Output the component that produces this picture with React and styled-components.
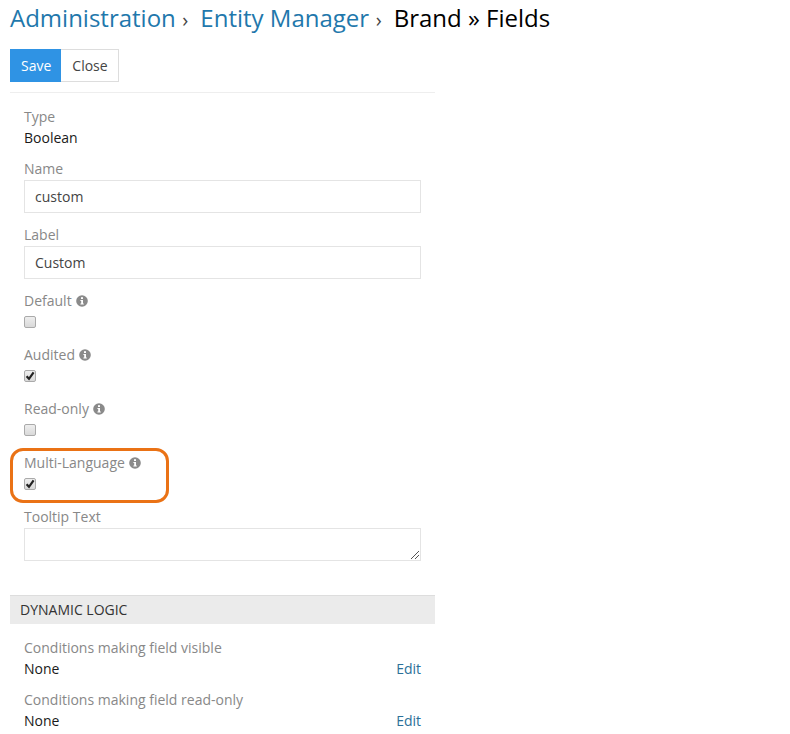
import React from 'react'
import styled, { createGlobalStyle } from 'styled-components'

const GlobalStyle = createGlobalStyle`
  html, body {
    margin: 0;
    background: #fff;
  }
  body {
    font-family: "Open Sans", "Liberation Sans", sans-serif;
    font-size: 14px;
    line-height: 20px;
    color: #333;
  }
`

const Page = styled.div`
  width: 790px;
  height: 734px;
  overflow: hidden;
  box-sizing: border-box;
  padding: 0 0 0 10px;
`
const Title = styled.h3`
  margin: 0;
  height: 49px;
  padding-top: 1px;
  box-sizing: border-box;
  font-size: 24px;
  line-height: 34px;
  font-weight: 400;
  color: #000;
  white-space: nowrap;
`
const Crumb = styled.a`
  color: #1f78ac;
`
const Sep = styled.span`
  margin: 0 12px 0 6.5px;
  font-size: 20px;
  color: #444;
`
const Buttons = styled.div`
  display: flex;
`
const Button = styled.button`
  height: 33px;
  box-sizing: border-box;
  padding: ${p => (p.$primary ? '0 9px 0 10px' : '0 10px 0 11px')};
  font: inherit;
  border: 1px solid ${p => (p.$primary ? '#2f93e4' : '#ddd')};
  border-left-width: ${p => (p.$primary ? 1 : 0)}px;
  background: ${p => (p.$primary ? '#2f93e4' : '#fff')};
  color: ${p => (p.$primary ? '#fff' : '#444')};
`
const Panel = styled.div`
  width: 425px;
  margin-top: 10px;
  border-top: 1px solid #eee;
`
const Body = styled.div`
  padding: 14px 14px 0;
`
const Field = styled.div`
  position: relative;
  margin-bottom: ${p => p.$gap ?? 12}px;
`
const Label = styled.div`
  height: 21px;
  color: #888;
  display: flex;
  align-items: flex-start;
  gap: 4px;
`
const Value = styled.div`
  color: #1a1a1a;
  margin-bottom: -1px;
`
const Input = styled.div`
  height: 33px;
  box-sizing: border-box;
  border: 1px solid #e4e4e4;
  padding: 6px 10px 0;
  color: #444;
`
const TextArea = styled(Input)`
  position: relative;
`
const Resize = styled.svg`
  position: absolute;
  right: 0;
  bottom: 0;
`
const CheckWrap = styled.div`
  height: 21px;
  padding-top: 4px;
  box-sizing: border-box;
`
const Box = styled.div`
  width: 10px;
  height: 10px;
  border: 1px solid #aaa;
  border-radius: 2px;
  background: linear-gradient(#eee, #d9d9d9);
  position: relative;
`
const Tick = styled.svg`
  position: absolute;
  left: 0;
  top: 0;
`
const Highlight = styled.div`
  position: absolute;
  left: -14px;
  top: -5px;
  width: 159px;
  height: 55px;
  box-sizing: border-box;
  border: 3px solid #ea7215;
  border-radius: 13px;
`
const SectionHead = styled.div`
  margin-top: 34px;
  height: 29px;
  box-sizing: border-box;
  border-top: 1px solid #ddd;
  background: #ebebeb;
  padding: 4px 10px;
  color: #333;
`
const LogicRow = styled.div`
  display: flex;
  justify-content: space-between;
  color: #1a1a1a;
`
const EditLink = styled.a`
  color: #2b7099;
`

const InfoIcon = () => (
  <svg width="12" height="12" viewBox="0 0 12 12" style={{ marginTop: 4 }}>
    <circle cx="6" cy="6" r="5.8" fill="#8a8a8a" />
    <rect x="5" y="2.2" width="2" height="1.8" fill="#fff" />
    <path d="M4.4 5h2.6v3.4h0.8v1H4.4v-1h0.8V6H4.4z" fill="#fff" />
  </svg>
)

const Checkbox = ({ checked }) => (
  <CheckWrap>
    <Box>
      {checked && (
        <Tick width="10" height="10" viewBox="0 0 10 10">
          <path d="M1.6 5.2 4 7.8 8.6 1.4" fill="none" stroke="#222" strokeWidth="2.2" />
        </Tick>
      )}
    </Box>
  </CheckWrap>
)

const checkFields = [
  { name: 'Default', checked: false },
  { name: 'Audited', checked: true },
  { name: 'Read-only', checked: false },
  { name: 'Multi-Language', checked: true, highlight: true }
]

const logic = ['Conditions making field visible', 'Conditions making field read-only']

export default function App() {
  return (
    <Page>
      <GlobalStyle />
      <Title>
        <Crumb>Administration</Crumb>
        <Sep>›</Sep>
        <Crumb>Entity Manager</Crumb>
        <Sep>›</Sep>
        Brand » Fields
      </Title>
      <Buttons>
        <Button $primary>Save</Button>
        <Button>Close</Button>
      </Buttons>
      <Panel>
        <Body>
          <Field>
            <Label>Type</Label>
            <Value>Boolean</Value>
          </Field>
          <Field>
            <Label>Name</Label>
            <Input>custom</Input>
          </Field>
          <Field>
            <Label>Label</Label>
            <Input>Custom</Input>
          </Field>
          {checkFields.map(f => (
            <Field key={f.name}>
              {f.highlight && <Highlight />}
              <Label>
                {f.name}
                <InfoIcon />
              </Label>
              <Checkbox checked={f.checked} />
            </Field>
          ))}
          <Field $gap={0}>
            <Label>Tooltip Text</Label>
            <TextArea>
              <Resize width="12" height="12" viewBox="0 0 12 12">
                <path d="M3 11 11 3M7 11 11 7" stroke="#555" strokeWidth="1" />
              </Resize>
            </TextArea>
          </Field>
        </Body>
        <SectionHead>DYNAMIC LOGIC</SectionHead>
        <Body>
          {logic.map(text => (
            <Field key={text} $gap={11}>
              <Label>{text}</Label>
              <LogicRow>
                None
                <EditLink>Edit</EditLink>
              </LogicRow>
            </Field>
          ))}
        </Body>
      </Panel>
    </Page>
  )
}
